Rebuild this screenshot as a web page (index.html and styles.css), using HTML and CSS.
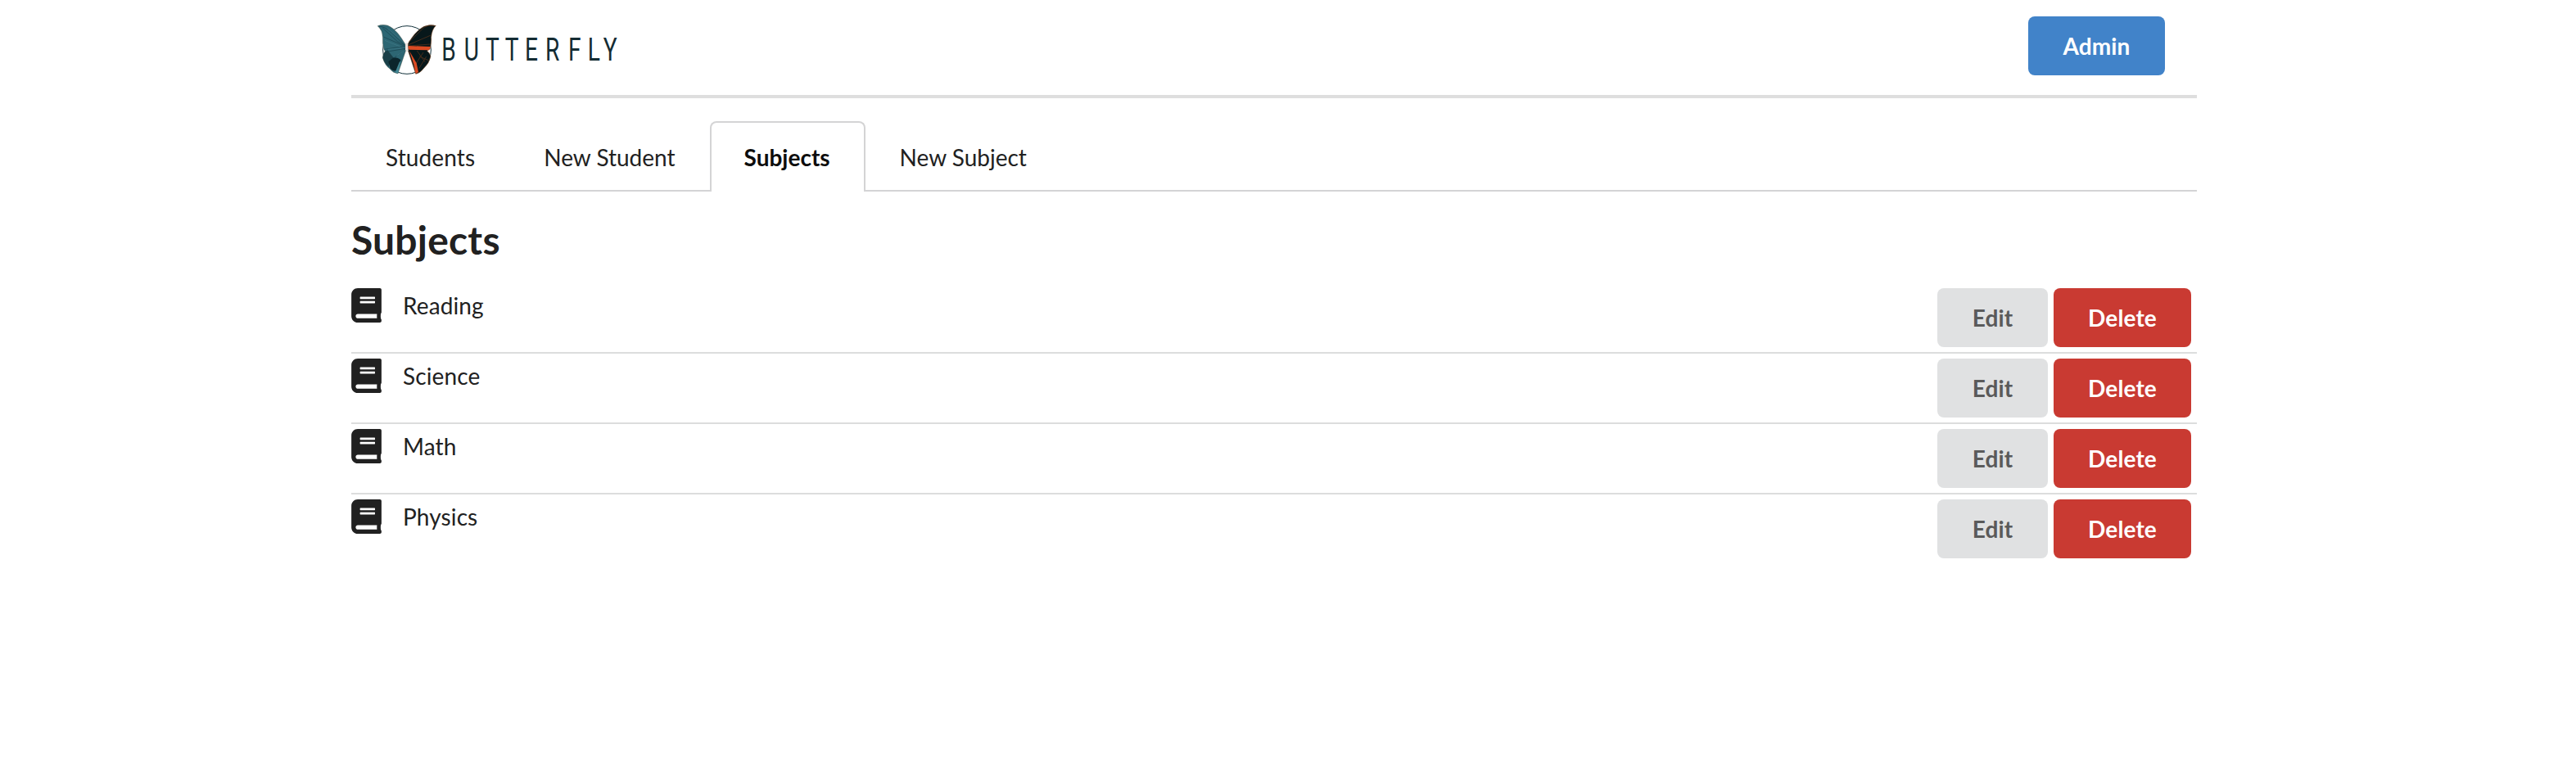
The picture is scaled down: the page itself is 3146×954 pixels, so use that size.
FILE: index.html
```html
<!DOCTYPE html>
<html lang="en">
<head>
<meta charset="utf-8">
<title>Butterfly</title>
<link rel="stylesheet" href="styles.css">
</head>
<body>
<svg class="sprite" aria-hidden="true">
  <symbol id="book" viewBox="0 0 448 512"><path d="M448 360V24c0-13.300-10.700-24-24-24H96C43 0 0 43 0 96v320c0 53 43 96 96 96h328c13.300 0 24-10.700 24-24v-16c0-7.500-3.500-14.300-8.900-18.700-4.200-15.400-4.200-59.300 0-74.700 5.400-4.300 8.900-11.100 8.900-18.600zM128 134c0-3.300 2.700-6 6-6h212c3.300 0 6 2.700 6 6v20c0 3.300-2.700 6-6 6H134c-3.300 0-6-2.700-6-6v-20zm0 64c0-3.300 2.700-6 6-6h212c3.300 0 6 2.700 6 6v20c0 3.300-2.700 6-6 6H134c-3.300 0-6-2.700-6-6v-20zm253.400 250H96c-17.700 0-32-14.300-32-32 0-17.600 14.400-32 32-32h285.400c-1.900 17.100-1.900 46.900 0 64z"/></symbol>
</svg>
<div class="container">
  <header class="header">
    <svg class="logo" viewBox="120 84 900 198" role="img" aria-label="Butterfly">
      <circle class="ring" cx="231" cy="183" r="88"/>
      <path class="wing-teal" d="M123 95Q140 88 160 93C190 106 208 134 225 162L228 182L198 270Q180 268 168 252Q150 239 142 212Q142 199 151 188L147 181Q140 158 142 137Q141 109 123 95Z"/>
      <path class="shade" d="M151 188L160 184L183 213L169 221L164 245Q146 230 142 211Q142 198 151 188Z" opacity=".6"/>
      <path class="shade" d="M183 211Q200 211 208 220L196 255Q186 266 170 251L163 226L172 218Z"/>
      <path class="vein" d="M128 96Q150 97 176 121L223 166M145 135L222 169M148 181L224 169M154 190L225 178M183 213L225 179M142 103L196 152L220 164"/>
      <path class="light" d="M160 105L206 143M150 148L206 171M162 181L211 177M193 204L221 184"/>
      <path class="wing-dark" d="M337 94Q315 88 293 97C266 112 248 137 235 160L234 183L263 271Q281 267 292 251Q313 232 318 207Q315 194 305 186L315 180Q322 157 320 137Q322 109 337 94Z"/>
      <path class="rust" d="M330 94Q311 90 294 100L237 155M319 129L237 164M317 162L238 168M268 186L297 227M291 192L260 239M302 207L275 251M309 221L277 207"/>
      <path class="orange" d="M236 168L318 171L312 184L239 182L235 178ZM240 187L266 231L273 264L263 270L256 236Z"/>
      <path class="teal-tip" d="M203 228L208 224L198 270L188 265Z"/>
      <path class="body" d="M226 159L233 156L236 185L229 191L225 181Z"/>
      <text class="wordmark" y="223" transform="scale(.74 1)" x="518.500 632 735 832 928 1032 1142 1238 1318">BUTTERFLY</text>
    </svg>
    <button class="button primary">Admin</button>
  </header>
  <nav class="tabs">
    <a class="tab">Students</a>
    <a class="tab">New Student</a>
    <a class="tab active">Subjects</a>
    <a class="tab">New Subject</a>
  </nav>
  <h1 class="title">Subjects</h1>
  <div class="list">
    <div class="item"><svg class="icon"><use href="#book"/></svg><span class="name">Reading</span><button class="button edit">Edit</button><button class="button negative">Delete</button></div>
    <div class="item"><svg class="icon"><use href="#book"/></svg><span class="name">Science</span><button class="button edit">Edit</button><button class="button negative">Delete</button></div>
    <div class="item"><svg class="icon"><use href="#book"/></svg><span class="name">Math</span><button class="button edit">Edit</button><button class="button negative">Delete</button></div>
    <div class="item"><svg class="icon"><use href="#book"/></svg><span class="name">Physics</span><button class="button edit">Edit</button><button class="button negative">Delete</button></div>
  </div>
</div>
</body>
</html>
```
FILE: styles.css
```css
* { box-sizing: border-box; }
body {
  margin: 0;
  background: #fff;
  color: #212121;
  font: 28px/40px Lato, sans-serif;
  letter-spacing: .12px;
}
.sprite { display: none; }
.container { width: 2254px; margin-left: 429px; }

.header {
  display: flex;
  justify-content: space-between;
  align-items: flex-start;
  height: 120px;
  padding: 20px 39px 0 31px;
  border-bottom: 4px solid #dedede;
}
.logo { width: 300px; height: 66px; margin-top: 8px; }
.ring { fill: none; stroke: #12313a; stroke-width: 3; }
.wing-teal { fill: #2d6673; stroke: #6b5a45; stroke-width: 1; }
.shade { fill: #0b252c; }
.vein { fill: none; stroke: #16404b; stroke-width: 2; }
.light { fill: none; stroke: #3a7381; stroke-width: 3; }
.wing-dark { fill: #07171a; stroke: #a9673b; stroke-width: 1.5; }
.rust { fill: none; stroke: #51301c; stroke-width: 2.5; }
.orange { fill: #dc4b23; }
.teal-tip { fill: #438693; }
.body { fill: #eee4df; }
.wordmark {
  font-family: Roboto, sans-serif;
  font-size: 114px;
  letter-spacing: 0;
  fill: #142c33;
  text-anchor: middle;
}

.button {
  width: 168px;
  height: 72px;
  margin: 0 7px 0 0;
  padding: 0;
  border: 0;
  border-radius: 8px;
  background: #e0e1e2;
  color: #5a5a5a;
  font: bold 28px/28px Lato, sans-serif;
  letter-spacing: .12px;
}
.edit { width: 135px; }
.primary { width: 167px; margin: 0; background: #4183c9; color: #fff; }
.negative { background: #c93a32; color: #fff; }

.tabs {
  display: flex;
  height: 86px;
  margin-top: 28px;
  border-bottom: 2px solid #d4d4d5;
  letter-spacing: 0;
}
.tab {
  height: 86px;
  padding: 22px 40px 0;
  border: 2px solid transparent;
  border-bottom: 0;
}
.tab:first-child { letter-spacing: .12px; }
.active {
  width: 190px;
  border-color: #d4d4d5;
  border-radius: 8px 8px 0 0;
  background: #fff;
  color: #0d0d0d;
  font-weight: bold;
}
.title { margin: 28px 0 0; font-size: 48px; line-height: 62px; letter-spacing: .2px; }

.list { margin-top: 22px; }
.item {
  display: flex;
  align-items: flex-start;
  height: 86px;
  padding-top: 6px;
  border-bottom: 2px solid #dcdddd;
}
.item:last-child { border-bottom-color: transparent; }
.icon { width: 37px; height: 42px; fill: #212121; }
.name { flex: 1; margin: 1px 0 0 26px; }
```
